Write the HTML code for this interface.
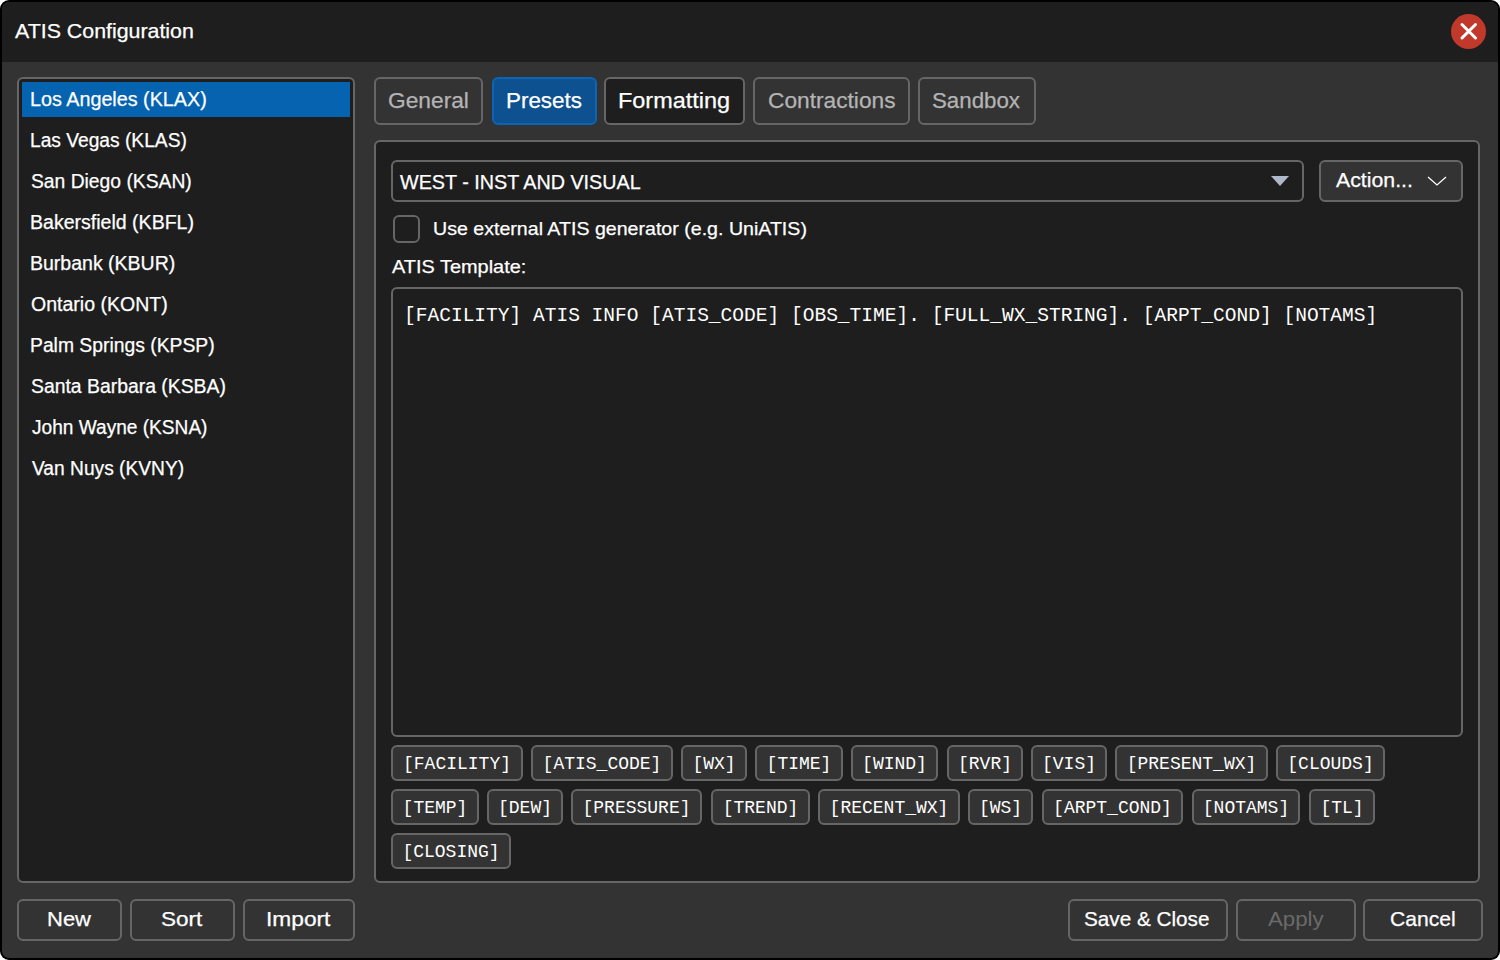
<!DOCTYPE html>
<html><head><meta charset="utf-8">
<style>
*{box-sizing:border-box;margin:0;padding:0}
html,body{width:1500px;height:960px;background:#fff;overflow:hidden}
body{font-family:"Liberation Sans",sans-serif;color:#fff;position:relative}
.win{position:absolute;left:2px;top:2px;width:1496px;height:956px;background:#333333;border-radius:7px;overflow:hidden}
.title{position:absolute;left:0;top:0;width:1496px;height:60px;background:#1e1e1e}
.abs{position:absolute;white-space:nowrap}
.t{position:absolute;white-space:nowrap;line-height:1;transform-origin:0 0}
.bl{display:inline-block;width:0;height:0}
.t{-webkit-text-stroke:0.25px currentColor}
#mono,#apply{-webkit-text-stroke:0}
.close{position:absolute;left:1451px;top:14px;width:35px;height:35px;border-radius:50%;background:#c0392b}
.list{position:absolute;left:17px;top:77px;width:338px;height:806px;background:#1e1e1e;border:2px solid #666;border-radius:6px}
.sel{position:absolute;left:22px;top:82px;width:328px;height:35px;background:#0563b0}
.item{font-size:20.5px}
.tab{position:absolute;top:77px;height:48px;border:2px solid #666;border-radius:6px;background:#333}
.panel{position:absolute;left:374px;top:140px;width:1106px;height:743px;background:#1e1e1e;border:2px solid #666;border-radius:6px}
.box{position:absolute;border:2px solid #666;border-radius:6px}
.chip{position:absolute;height:36px;border:2px solid #666;border-radius:6px;background:#333;font-family:"Liberation Mono",monospace;font-size:18px;line-height:34px;text-align:center;white-space:nowrap}
.btn{position:absolute;top:899px;height:42px;border:2px solid #666;border-radius:6px;background:#333}
.mono{font-family:"Liberation Mono",monospace}
</style></head><body>
<div class="abs" style="left:0;top:0;width:1500px;height:960px;background:#000;border-radius:9px"></div>
<div class="win"></div>
<div class="abs" style="left:2px;top:2px;width:1496px;height:60px;background:#1e1e1e;border-radius:7px 7px 0 0"></div>
<div class="close"></div>
<svg class="abs" style="left:1451px;top:14px" width="35" height="35" viewBox="0 0 35 35"><path d="M11 10.5L24.5 24M24.5 10.5L11 24" stroke="#fff" stroke-width="3" stroke-linecap="round"/></svg>

<div class="list"></div>
<div class="sel"></div>


<div class="tab" style="left:374px;width:109px"></div>
<div class="tab" style="left:492px;width:105px;background:#0e5190;border-color:#0b64b4"></div>
<div class="tab" style="left:604px;width:141px;background:#1e1e1e"></div>
<div class="tab" style="left:753px;width:157px"></div>
<div class="tab" style="left:918px;width:118px"></div>

<div class="panel"></div>
<div class="box" style="left:391px;top:160px;width:913px;height:42px"></div>
<svg class="abs" style="left:1270px;top:175px" width="20" height="12"><path d="M1 1L19 1L10 11Z" fill="#adb9c8"/></svg>
<div class="box" style="left:1319px;top:160px;width:144px;height:42px;background:#333"></div>
<svg class="abs" style="left:1426px;top:174px" width="22" height="14"><path d="M2 3L11 11L20 3" stroke="#fff" stroke-width="1.3" fill="none"/></svg>

<div class="box" style="left:393px;top:215px;width:27px;height:28px;border-radius:6px;border-color:#666"></div>

<div class="box" style="left:391px;top:287px;width:1072px;height:450px"></div>

<div class="chip" style="left:391px;top:745px;width:132px">[FACILITY]</div>
<div class="chip" style="left:531px;top:745px;width:142px">[ATIS_CODE]</div>
<div class="chip" style="left:681px;top:745px;width:66px">[WX]</div>
<div class="chip" style="left:755px;top:745px;width:88px">[TIME]</div>
<div class="chip" style="left:851px;top:745px;width:87px">[WIND]</div>
<div class="chip" style="left:947px;top:745px;width:76px">[RVR]</div>
<div class="chip" style="left:1031px;top:745px;width:76px">[VIS]</div>
<div class="chip" style="left:1115px;top:745px;width:153px">[PRESENT_WX]</div>
<div class="chip" style="left:1276px;top:745px;width:109px">[CLOUDS]</div>
<div class="chip" style="left:391px;top:789px;width:88px">[TEMP]</div>
<div class="chip" style="left:487px;top:789px;width:76px">[DEW]</div>
<div class="chip" style="left:571px;top:789px;width:131px">[PRESSURE]</div>
<div class="chip" style="left:711px;top:789px;width:99px">[TREND]</div>
<div class="chip" style="left:818px;top:789px;width:142px">[RECENT_WX]</div>
<div class="chip" style="left:968px;top:789px;width:65px">[WS]</div>
<div class="chip" style="left:1042px;top:789px;width:141px">[ARPT_COND]</div>
<div class="chip" style="left:1192px;top:789px;width:108px">[NOTAMS]</div>
<div class="chip" style="left:1309px;top:789px;width:66px">[TL]</div>
<div class="chip" style="left:391px;top:833px;width:120px">[CLOSING]</div>

<div class="btn" style="left:17px;width:105px"></div>
<div class="btn" style="left:130px;width:105px"></div>
<div class="btn" style="left:243px;width:112px"></div>

<div class="btn" style="left:1068px;width:160px"></div>
<div class="btn" style="left:1236px;width:120px"></div>
<div class="btn" style="left:1363px;width:120px"></div>
<div class="t" id="title" style="left:14.81px;top:20.00px;font-family:'Liberation Sans',sans-serif;font-size:21px;color:#fff;transform:scaleX(1.0171)"><i class="bl"></i>ATIS Configuration</div>
<div class="t" id="li0" style="left:30.02px;top:89.00px;font-family:'Liberation Sans',sans-serif;font-size:20px;color:#fff;transform:scaleX(0.9876)"><i class="bl"></i>Los Angeles (KLAX)</div>
<div class="t" id="li1" style="left:30.06px;top:130.00px;font-family:'Liberation Sans',sans-serif;font-size:20px;color:#fff;transform:scaleX(0.9596)"><i class="bl"></i>Las Vegas (KLAS)</div>
<div class="t" id="li2" style="left:31.02px;top:171.00px;font-family:'Liberation Sans',sans-serif;font-size:20px;color:#fff;transform:scaleX(0.9639)"><i class="bl"></i>San Diego (KSAN)</div>
<div class="t" id="li3" style="left:30.03px;top:212.00px;font-family:'Liberation Sans',sans-serif;font-size:20px;color:#fff;transform:scaleX(0.9771)"><i class="bl"></i>Bakersfield (KBFL)</div>
<div class="t" id="li4" style="left:30.04px;top:253.00px;font-family:'Liberation Sans',sans-serif;font-size:20px;color:#fff;transform:scaleX(0.9755)"><i class="bl"></i>Burbank (KBUR)</div>
<div class="t" id="li5" style="left:31.01px;top:294.00px;font-family:'Liberation Sans',sans-serif;font-size:20px;color:#fff;transform:scaleX(0.9770)"><i class="bl"></i>Ontario (KONT)</div>
<div class="t" id="li6" style="left:30.05px;top:335.00px;font-family:'Liberation Sans',sans-serif;font-size:20px;color:#fff;transform:scaleX(0.9656)"><i class="bl"></i>Palm Springs (KPSP)</div>
<div class="t" id="li7" style="left:31.02px;top:376.00px;font-family:'Liberation Sans',sans-serif;font-size:20px;color:#fff;transform:scaleX(0.9685)"><i class="bl"></i>Santa Barbara (KSBA)</div>
<div class="t" id="li8" style="left:31.98px;top:417.00px;font-family:'Liberation Sans',sans-serif;font-size:20px;color:#fff;transform:scaleX(0.9549)"><i class="bl"></i>John Wayne (KSNA)</div>
<div class="t" id="li9" style="left:31.98px;top:458.00px;font-family:'Liberation Sans',sans-serif;font-size:20px;color:#fff;transform:scaleX(0.9591)"><i class="bl"></i>Van Nuys (KVNY)</div>
<div class="t" id="tab0" style="left:388.17px;top:90.01px;font-family:'Liberation Sans',sans-serif;font-size:22px;color:#b4b4b4;transform:scaleX(1.0338)"><i class="bl"></i>General</div>
<div class="t" id="tab1" style="left:505.78px;top:90.01px;font-family:'Liberation Sans',sans-serif;font-size:22px;color:#fff;transform:scaleX(1.0178)"><i class="bl"></i>Presets</div>
<div class="t" id="tab2" style="left:618.14px;top:90.01px;font-family:'Liberation Sans',sans-serif;font-size:22px;color:#fff;transform:scaleX(1.0650)"><i class="bl"></i>Formatting</div>
<div class="t" id="tab3" style="left:767.59px;top:90.01px;font-family:'Liberation Sans',sans-serif;font-size:22px;color:#b4b4b4;transform:scaleX(1.0325)"><i class="bl"></i>Contractions</div>
<div class="t" id="tab4" style="left:932.40px;top:90.01px;font-family:'Liberation Sans',sans-serif;font-size:22px;color:#b4b4b4;transform:scaleX(1.0126)"><i class="bl"></i>Sandbox</div>
<div class="t" id="west" style="left:400.18px;top:171.61px;font-family:'Liberation Sans',sans-serif;font-size:20.5px;color:#fff;transform:scaleX(0.9632)"><i class="bl"></i>WEST - INST AND VISUAL</div>
<div class="t" id="action" style="left:1336.20px;top:170.21px;font-family:'Liberation Sans',sans-serif;font-size:20.5px;color:#fff;transform:scaleX(1.0384)"><i class="bl"></i>Action...</div>
<div class="t" id="useext" style="left:432.56px;top:219.01px;font-family:'Liberation Sans',sans-serif;font-size:19px;color:#fff;transform:scaleX(1.0313)"><i class="bl"></i>Use external ATIS generator (e.g. UniATIS)</div>
<div class="t" id="tmpl" style="left:391.82px;top:256.92px;font-family:'Liberation Sans',sans-serif;font-size:19px;color:#fff;transform:scaleX(1.0480)"><i class="bl"></i>ATIS Template:</div>
<div class="t" id="mono" style="left:404.28px;top:306.11px;font-family:'Liberation Mono',monospace;font-size:20px;color:#fff;transform:scaleX(0.9770)"><i class="bl"></i>[FACILITY] ATIS INFO [ATIS_CODE] [OBS_TIME]. [FULL_WX_STRING]. [ARPT_COND] [NOTAMS]</div>
<div class="t" id="new" style="left:46.74px;top:909.21px;font-family:'Liberation Sans',sans-serif;font-size:20.8px;color:#fff;transform:scaleX(1.0573)"><i class="bl"></i>New</div>
<div class="t" id="sort" style="left:161.13px;top:909.21px;font-family:'Liberation Sans',sans-serif;font-size:20.8px;color:#fff;transform:scaleX(1.0816)"><i class="bl"></i>Sort</div>
<div class="t" id="import" style="left:265.65px;top:909.21px;font-family:'Liberation Sans',sans-serif;font-size:20.8px;color:#fff;transform:scaleX(1.0931)"><i class="bl"></i>Import</div>
<div class="t" id="save" style="left:1084.40px;top:909.21px;font-family:'Liberation Sans',sans-serif;font-size:20.8px;color:#fff;transform:scaleX(0.9960)"><i class="bl"></i>Save &amp; Close</div>
<div class="t" id="apply" style="left:1268.38px;top:909.21px;font-family:'Liberation Sans',sans-serif;font-size:20.8px;color:#6a6a6a;transform:scaleX(1.0692)"><i class="bl"></i>Apply</div>
<div class="t" id="cancel" style="left:1389.59px;top:909.21px;font-family:'Liberation Sans',sans-serif;font-size:20.8px;color:#fff;transform:scaleX(1.0143)"><i class="bl"></i>Cancel</div>
</body></html>
